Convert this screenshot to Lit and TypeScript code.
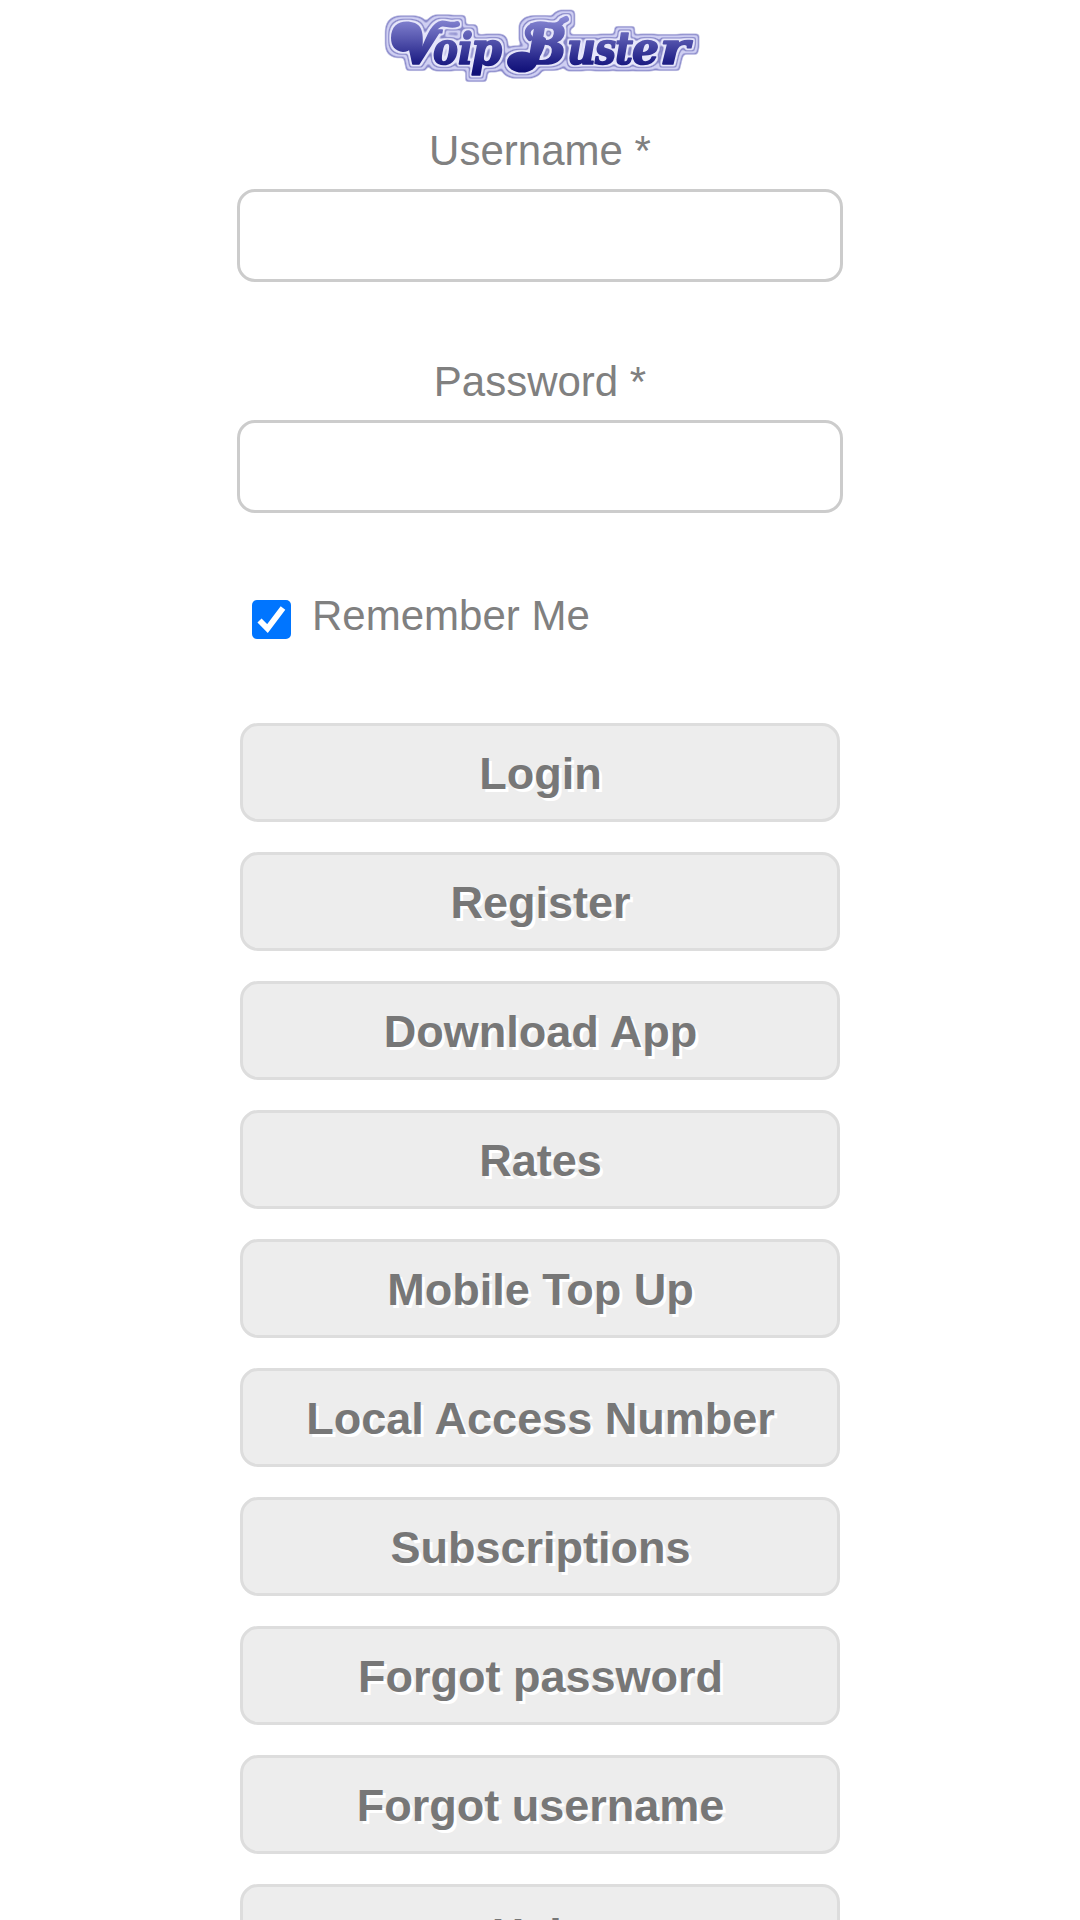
import { LitElement, html, css, svg } from "lit";
import { customElement, property } from "lit/decorators.js";

// character, x, baseline, font size, advance width
const LETTERS: Array<[string, number, number, number, number]> = [
  ["V", 400, 64, 47, 38],
  ["o", 433, 64, 44, 25],
  ["i", 458, 64, 43, 15],
  ["p", 471, 65, 46, 31],
  ["B", 525, 64, 54, 42],
  ["u", 567, 64, 44, 29],
  ["s", 595, 64, 44, 21],
  ["t", 615, 64, 44, 18],
  ["e", 632, 64, 44, 27],
  ["r", 660, 64, 44, 29],
];

@customElement("brand-logo")
export class BrandLogo extends LitElement {
  static styles = css`
    :host { display: block; width: 316px; height: 75px; }
    .logo { display: block; width: 100%; height: 100%; }
    .text {
      font-family: "DejaVu Serif", "Liberation Serif", serif; font-weight: 700; font-style: italic;
      stroke: url(#ink); stroke-width: 1.6px; stroke-linejoin: round;
    }
    .mark { fill: url(#ink); filter: url(#outline); }
    .swash { fill: none; stroke: url(#ink); stroke-linecap: round; }
  `;

  render() {
    return html`<svg class="logo" viewBox="384 9 316 75">
      <defs>
        <linearGradient id="ink" gradientUnits="userSpaceOnUse" x1="0" y1="16" x2="0" y2="72">
          <stop offset="0" stop-color="#8a8ad6" />
          <stop offset="0.4" stop-color="#5858b0" />
          <stop offset="0.78" stop-color="#25258a" />
          <stop offset="1" stop-color="#101078" />
        </linearGradient>
        <filter id="outline" filterUnits="userSpaceOnUse" x="374" y="0" width="336" height="94" color-interpolation-filters="sRGB">
          <feMorphology in="SourceAlpha" operator="dilate" radius="6" />
          <feGaussianBlur stdDeviation="1.7" />
          <feComponentTransfer result="a5"><feFuncA type="linear" slope="2.6" intercept="-0.8" /></feComponentTransfer>
          <feFlood flood-color="#8a8acb" /><feComposite in2="a5" operator="in" result="edge" />
          <feMorphology in="SourceAlpha" operator="dilate" radius="5" />
          <feGaussianBlur stdDeviation="1.5" />
          <feComponentTransfer result="a4"><feFuncA type="linear" slope="2.6" intercept="-1" /></feComponentTransfer>
          <feFlood flood-color="#cfcff2" /><feComposite in2="a4" operator="in" result="rim" />
          <feMorphology in="SourceAlpha" operator="dilate" radius="3" />
          <feGaussianBlur stdDeviation="1" />
          <feComponentTransfer result="a3"><feFuncA type="linear" slope="2.6" intercept="-1" /></feComponentTransfer>
          <feFlood flood-color="#8787c8" /><feComposite in2="a3" operator="in" result="line" />
          <feMorphology in="SourceAlpha" operator="dilate" radius="2" />
          <feGaussianBlur stdDeviation="0.9" />
          <feComponentTransfer result="a2"><feFuncA type="linear" slope="2.4" intercept="-0.9" /></feComponentTransfer>
          <feFlood flood-color="#e6e6fa" /><feComposite in2="a2" operator="in" result="halo" />
          <feMerge result="all">
            <feMergeNode in="edge" /><feMergeNode in="rim" /><feMergeNode in="line" />
            <feMergeNode in="halo" /><feMergeNode in="SourceGraphic" />
          </feMerge>
          <feGaussianBlur in="all" stdDeviation="0.7" />
        </filter>
      </defs>
      <g class="mark">
        <path d="M391 38 C391 25 400 20 411 22 C423 24 425 33 421 60 L412 64 C411 52 414 42 412 38 C415 46 410 52 403 52 C395 51 391 46 391 38Z" />
        <path class="swash" stroke-width="6" d="M417 60 C428 48 428 33 437 26 C444 20 448 27 457 24" />
        <ellipse cx="522" cy="62" rx="15" ry="10.5" />
        <path class="swash" stroke-width="6" d="M533 60 Q540 54 543 40 M530 38 C523 30 533 22 547 25 Q559 27 562 21 L566 19" />
        ${LETTERS.map(
          ([c, x, y, size, w]) =>
            svg`<text class="text" x=${x} y=${y} font-size=${size} textLength=${w} lengthAdjust="spacingAndGlyphs">${c}</text>`
        )}
      </g>
    </svg>`;
  }
}

@customElement("login-field")
export class LoginField extends LitElement {
  @property() label = "";
  @property() type = "text";
  static styles = css`
    :host { display: flex; flex-direction: column; align-items: center; }
    .label { font-size: 42px; line-height: 48px; margin-bottom: 14px; }
    .input {
      box-sizing: border-box; width: 606px; height: 93px; margin: 0; padding: 0 18px;
      border: 3px solid #ccc; border-radius: 18px; background: #fff; outline: none;
      font: 42px "Liberation Sans", Arial, sans-serif; color: #808080;
    }
  `;
  render() {
    return html`<label class="label" for="input">${this.label} *</label>
      <input class="input" id="input" type=${this.type} />`;
  }
}

@customElement("app-root")
export class AppRoot extends LitElement {
  static styles = css`
    :host {
      display: flex; flex-direction: column; align-items: center; box-sizing: border-box;
      height: 1920px; overflow: hidden; padding-top: 9px;
      background: #fff; color: #808080; font-family: "Liberation Sans", Arial, sans-serif;
    }
    .logo { margin-left: 4px; }
    .fields { display: flex; flex-direction: column; gap: 76px; margin-top: 43px; }
    .remember { display: flex; width: 576px; height: 48px; margin-top: 79px; font-size: 42px; line-height: 48px; }
    .check { width: 39px; height: 39px; margin: 8px 21px 0 0; flex: none; }
    .menu { display: flex; flex-direction: column; gap: 30px; margin-top: 83px; }
    .button {
      box-sizing: border-box; flex: none; width: 600px; height: 99px; margin: 0; padding: 2px 0 0 1px;
      border: 3px solid #ddd; border-radius: 18px; background: #ededed; color: #777;
      font: bold 45px "Liberation Sans", Arial, sans-serif; text-shadow: 3px 3px 0 #fff;
    }
  `;

  private items = [
    "Login", "Register", "Download App", "Rates", "Mobile Top Up",
    "Local Access Number", "Subscriptions", "Forgot password", "Forgot username", "Help",
  ];

  render() {
    return html`
      <brand-logo class="logo"></brand-logo>
      <div class="fields">
        <login-field label="Username"></login-field>
        <login-field label="Password" type="password"></login-field>
      </div>
      <label class="remember">
        <svg class="check" viewBox="0 0 39 39">
          <rect width="39" height="39" rx="5" fill="#0075ff" />
          <path d="M7.5 20.5 L15.5 28.5 L31 8" fill="none" stroke="#fff" stroke-width="5.8" />
        </svg>
        <span>Remember Me</span>
      </label>
      <div class="menu">${this.items.map((t) => html`<button class="button">${t}</button>`)}</div>
    `;
  }
}
